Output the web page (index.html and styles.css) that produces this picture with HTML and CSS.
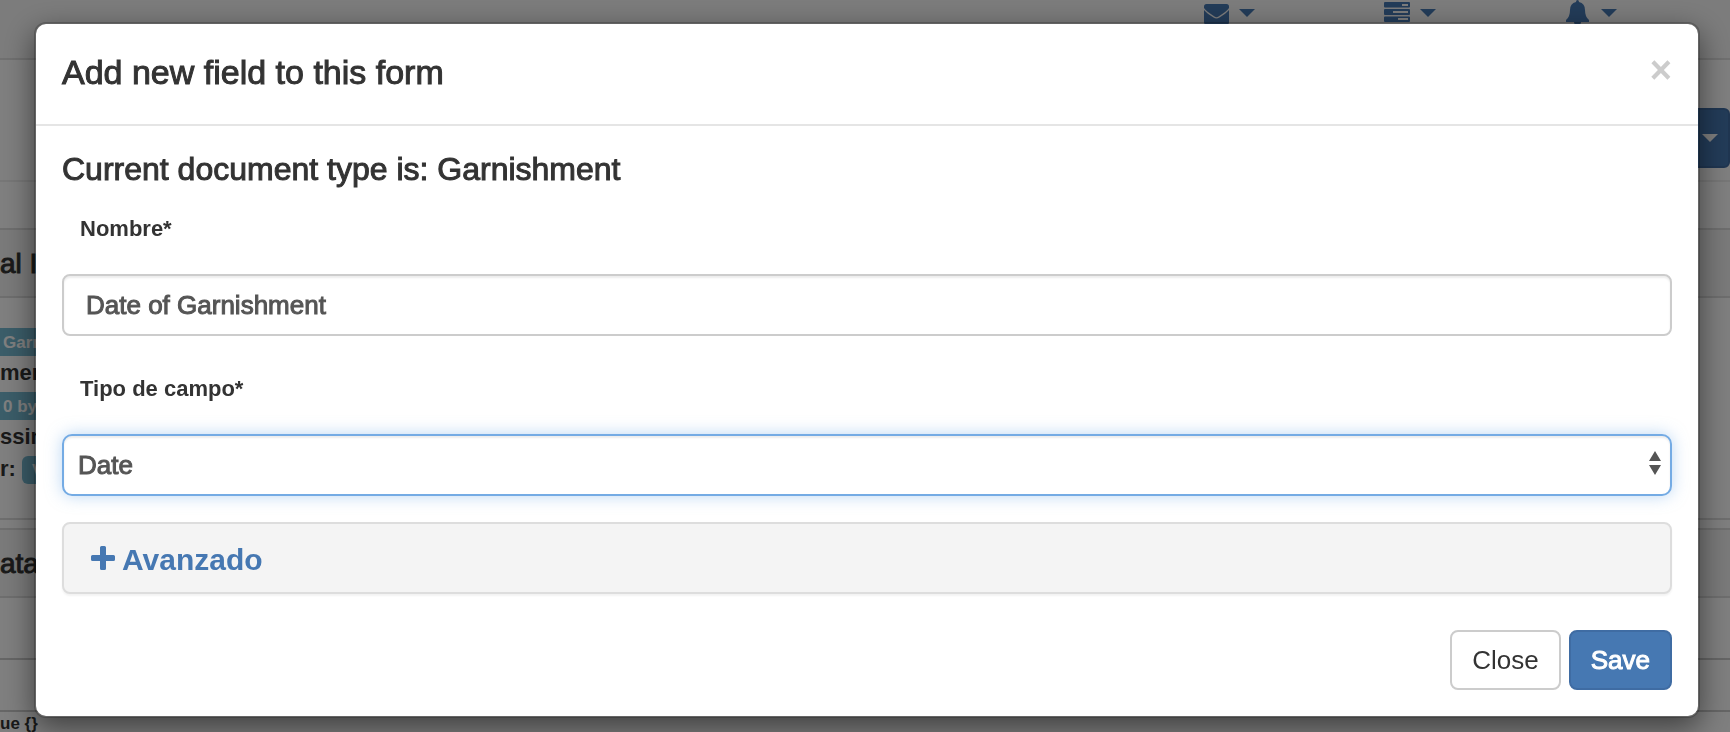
FILE: index.html
```html
<!DOCTYPE html>
<html lang="en">
<head>
    <meta charset="UTF-8">
    <title>Document types</title>
    <meta name="viewport" content="width=device-width, initial-scale=1.0">
    <link rel="stylesheet" href="styles.css">
</head>
<body>

    <div class="page">
        <nav class="topbar">
            <a class="nav-item" href="#" aria-label="Messages">
                <svg class="nav-icon" viewBox="0 0 26 28"><path d="M1 6.500Q1 4 3.500 4H23.500Q26 4 26 6.500V8Q24 11 15.500 16.500Q13.500 18 11.500 16.500Q3 11 1 8ZM1 10Q4 13.500 10.500 17.500Q13.500 19.500 16.500 17.500Q23 13.500 26 10V22Q26 25 23 25H4Q1 25 1 22Z"/></svg>
                <span class="caret"></span>
            </a>
            <a class="nav-item" href="#" aria-label="Tasks">
                <svg class="nav-icon" viewBox="0 0 26 28"><path fill-rule="evenodd" d="M1 2H25Q26 2 26 3V6.500Q26 7.500 25 7.500H1Q0 7.500 0 6.500V3Q0 2 1 2ZM18 4V6H24V4ZM1 9H25Q26 9 26 10V14Q26 15 25 15H1Q0 15 0 14V10Q0 9 1 9ZM9 11V13H24V11ZM1 16.500H25Q26 16.500 26 17.500V21Q26 22 25 22H1Q0 22 0 21V17.500Q0 16.500 1 16.500ZM14 18V20H24V18Z"/></svg>
                <span class="caret"></span>
            </a>
            <a class="nav-item" href="#" aria-label="Alerts">
                <svg class="nav-icon" viewBox="0 0 26 28"><path d="M12.500 0Q14 0 14 2Q20 3.500 20 10Q20 17 24 20V22H16Q16 25 12.500 25Q9 25 9 22H1V20Q5 17 5 10Q5 3.500 11 2Q11 0 12.500 0Z"/></svg>
                <span class="caret"></span>
            </a>
        </nav>

        <div class="toolbar">
            <button class="btn-dropdown" type="button" aria-label="Actions"><span class="caret"></span></button>
        </div>

        <section class="panel panel-general">
            <h3 class="panel-title">al I</h3>
            <div class="panel-content">
                <div><span class="tag">Garn</span></div>
                <div>men</div>
                <div><span class="tag">0 by</span></div>
                <div>ssin</div>
                <div>r: <span class="tag tag-round">V</span></div>
            </div>
        </section>

        <section class="panel panel-data">
            <h3 class="panel-title">ata</h3>
            <div class="data-row"></div>
            <div class="data-row data-row-short"></div>
            <div class="data-text">ue {}</div>
        </section>
    </div>

    <div class="backdrop">
        <form class="modal" role="dialog" aria-labelledby="modal-title">
            <header class="modal-header">
                <h2 class="modal-title" id="modal-title">Add new field to this form</h2>
                <button class="modal-close" type="button" aria-label="Dismiss">×</button>
            </header>

            <div class="modal-body">
                <h4 class="doc-type">Current document type is: Garnishment</h4>

                <div class="form-group">
                    <label for="nombre">Nombre*</label>
                    <input class="form-control" id="nombre" type="text" value="Date of Garnishment">
                </div>

                <div class="form-group">
                    <label for="tipo">Tipo de campo*</label>
                    <div class="select-wrap">
                        <select class="form-control form-select" id="tipo">
                            <option>Date</option>
                        </select>
                        <svg class="select-arrows" viewBox="0 0 12 24"><path d="M6 0L12 10H0ZM0 14H12L6 24Z"/></svg>
                    </div>
                </div>

                <div class="advanced">
                    <a class="advanced-link" href="#">
                        <svg class="plus" viewBox="0 0 24 24"><path d="M10.500 0H13.500Q15 0 15 1.500V9H22.500Q24 9 24 10.500V13.500Q24 15 22.500 15H15V22.500Q15 24 13.500 24H10.500Q9 24 9 22.500V15H1.500Q0 15 0 13.500V10.500Q0 9 1.500 9H9V1.500Q9 0 10.500 0Z"/></svg>
                        Avanzado
                    </a>
                </div>
            </div>

            <footer class="modal-footer">
                <button class="btn" type="button">Close</button>
                <button class="btn btn-primary" type="submit">Save</button>
            </footer>
        </form>
    </div>

</body>
</html>
```
FILE: styles.css
```css
* {
    box-sizing: border-box;
}

body {
    margin: 0;
    font-family: "Liberation Sans", Arial, sans-serif;
    font-size: 26px;
    color: #333;
    background: #fff;
}

h2, h3, h4 {
    margin: 0;
    font-weight: 400;
}

/* medium weight for headings and field text */
h2, h3, h4, .form-control, .btn-primary {
    -webkit-text-stroke: 1px currentColor;
}

button, input, select {
    font-family: inherit;
    font-size: 26px;
}

/* Page behind the dialog */
.page {
    height: 100vh;
    overflow: hidden;
}

.topbar {
    display: flex;
    justify-content: flex-end;
    gap: 129px;
    height: 60px;
    padding-right: 113px;
    background: #f8f8f8;
    border-bottom: 2px solid #e0e0e0;
}

.nav-item {
    display: flex;
    gap: 10px;
    color: #4678b2;
}

.nav-icon {
    width: 26px;
    height: 28px;
    fill: currentColor;
}

.caret {
    width: 0;
    height: 0;
    border: 8px solid transparent;
    border-top-color: currentColor;
    border-bottom: 0;
}

.nav-item .caret {
    margin-top: 9px;
}

.toolbar {
    display: flex;
    justify-content: flex-end;
    align-items: flex-end;
    height: 122px;
    padding-bottom: 12px;
    border-bottom: 2px solid #eee;
}

.btn-dropdown {
    display: flex;
    align-items: center;
    justify-content: flex-end;
    width: 60px;
    height: 60px;
    padding: 0 10px;
    color: #fff;
    background: #4678b2;
    border: 2px solid #3f6ca3;
    border-radius: 6px;
}

.panel {
    border: solid #ddd;
    border-width: 2px 0;
}

.panel-general {
    height: 292px;
    margin-top: 46px;
}

.panel-data {
    margin-top: 8px;
}

.panel-title {
    height: 68px;
    font-size: 28px;
    line-height: 68px;
    background: #f5f5f5;
    border-bottom: 2px solid #ddd;
}

.panel-content {
    padding-top: 27px;
    font-size: 22px;
    font-weight: 700;
    line-height: 32px;
    white-space: nowrap;
}

.panel-content div {
    height: 32px;
}

.tag {
    display: inline-block;
    min-width: 60px;
    height: 28px;
    margin-top: 3px;
    padding-left: 3px;
    font-size: 17px;
    line-height: 30px;
    vertical-align: top;
    color: #fff;
    background: #76bad2;
}

.tag-round {
    padding-left: 10px;
    border-radius: 6px;
}

.data-row {
    height: 62px;
    border-bottom: 2px solid #ccc;
}

.data-row-short {
    height: 52px;
}

.data-text {
    font-size: 17px;
    font-weight: 700;
    line-height: 24px;
}

/* Dialog */
.backdrop {
    position: fixed;
    inset: 0;
    padding: 22px 30px 14px 34px;
    overflow: hidden;
    background: rgba(0, 0, 0, 0.5);
}

.modal {
    background: #fff;
    background-clip: padding-box;
    border: 2px solid rgba(0, 0, 0, 0.2);
    border-radius: 12px;
    box-shadow: 0 10px 30px rgba(0, 0, 0, 0.5);
}

.modal-header {
    display: flex;
    justify-content: space-between;
    padding: 26px 26px 30px;
    border-bottom: 2px solid #e5e5e5;
}

.modal-title {
    font-size: 34px;
    line-height: 44px;
}

.modal-close {
    height: 40px;
    padding: 0;
    font-size: 38px;
    font-weight: 700;
    line-height: 40px;
    color: #ccc;
    background: none;
    border: 0;
}

.modal-body {
    padding: 26px 26px 0;
}

.doc-type {
    margin-bottom: 26px;
    font-size: 32px;
    line-height: 34px;
}

.form-group {
    margin-bottom: 36px;
}

.form-group label {
    display: block;
    margin-bottom: 28px;
    padding-left: 18px;
    font-size: 22px;
    font-weight: 700;
    line-height: 34px;
}

.form-control {
    display: block;
    width: 100%;
    height: 62px;
    padding: 0 22px;
    color: #555;
    background: #fff;
    border: 2px solid #ccc;
    border-radius: 8px;
    box-shadow: inset 0 2px 2px rgba(0, 0, 0, 0.075);
    outline: 0;
}

.select-wrap {
    position: relative;
}

.form-select {
    appearance: none;
    padding: 0 14px;
    border-color: #74abe4;
    border-radius: 10px;
    box-shadow: inset 0 2px 2px rgba(0, 0, 0, 0.075), 0 0 16px rgba(120, 175, 233, 0.5);
}

.select-arrows {
    position: absolute;
    top: 17px;
    right: 11px;
    width: 12px;
    height: 24px;
    fill: #555;
    pointer-events: none;
}

.form-group + .advanced {
    margin-top: -10px;
}

.advanced {
    padding: 18px 27px 14px;
    background: #f4f4f4;
    border: 2px solid #ddd;
    border-radius: 8px;
    box-shadow: 0 2px 2px rgba(0, 0, 0, 0.05);
}

.advanced-link {
    display: flex;
    align-items: baseline;
    gap: 7px;
    font-size: 30px;
    font-weight: 700;
    line-height: 36px;
    color: #4678b2;
    text-decoration: none;
}

.plus {
    width: 24px;
    height: 24px;
    fill: currentColor;
}

.modal-footer {
    display: flex;
    justify-content: flex-end;
    gap: 8px;
    padding: 36px 26px 26px;
}

.btn {
    height: 60px;
    padding: 0 20px;
    color: #333;
    background: #fff;
    border: 2px solid #ccc;
    border-radius: 8px;
}

.btn-primary {
    color: #fff;
    background: #4678b2;
    border-color: #3f6ca3;
}
```
